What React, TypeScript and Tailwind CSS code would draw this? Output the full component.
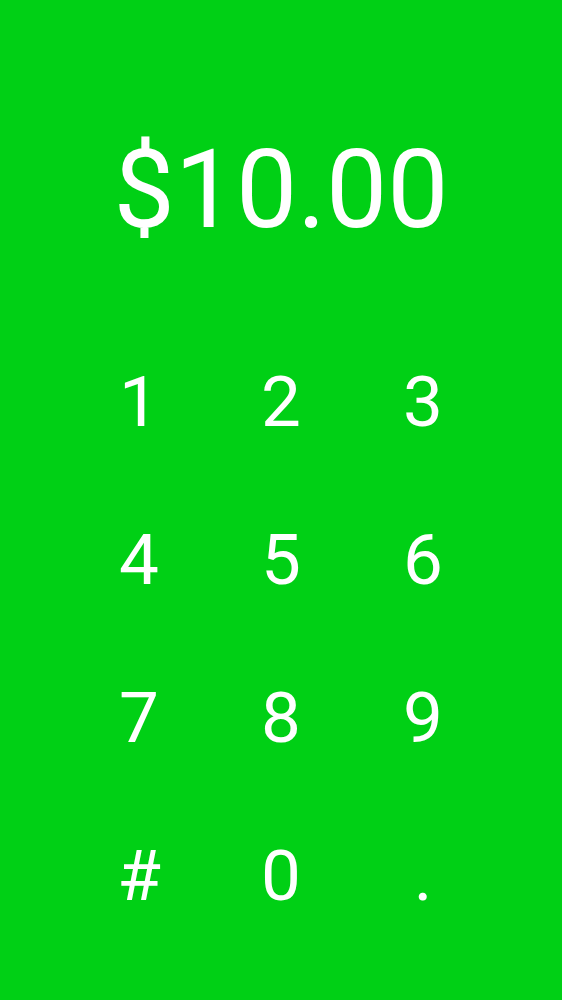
import React from "react";

const keys = ["1", "2", "3", "4", "5", "6", "7", "8", "9", "#", "0", "."];

export default function App() {
  return (
    <div
      className="h-[1000px] w-full bg-[#00d015] text-white overflow-hidden"
      style={{ fontFamily: "Roboto, 'Noto Sans', sans-serif" }}
    >
      <div className="pt-[136px] text-center text-[109px] leading-none font-normal">
        $10.00
      </div>
      <div className="mt-[78px] mx-auto w-[426px] grid grid-cols-3">
        {keys.map((k) => (
          <div key={k} className="h-[158px] text-center text-[71px] leading-[158px]">
            {k}
          </div>
        ))}
      </div>
    </div>
  );
}
